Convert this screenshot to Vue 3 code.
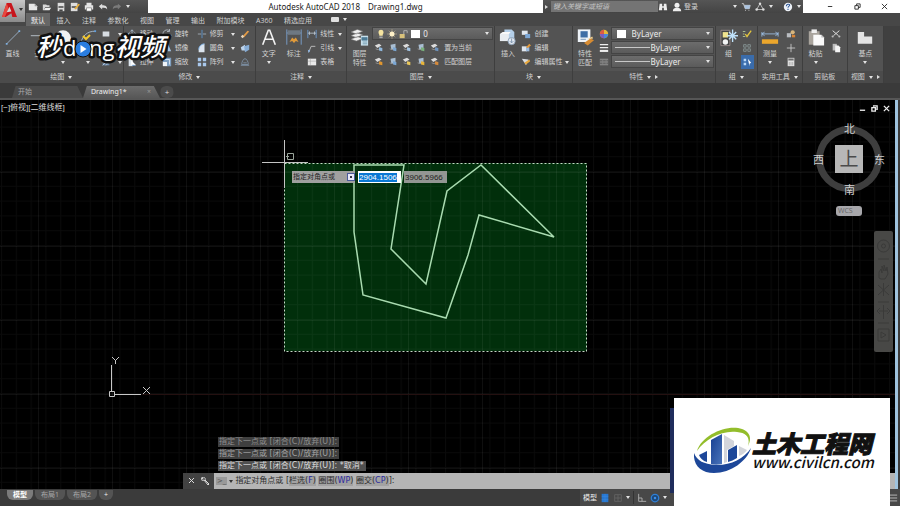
<template>
  <div class="app">
    <header class="titlebar">
      <div class="quick">
        <button v-for="q in quick" :key="q" class="tool" :class="{ dim: q === 'redo' }" :aria-label="q">
          <svg class="icon" viewBox="0 0 12 12" v-html="icons[q]" />
        </button>
        <span class="caret" />
      </div>
      <div class="title">
        <span>Autodesk AutoCAD 2018</span>
        <span>Drawing1.dwg</span>
      </div>
      <div class="search">
        <span class="caret right" />
        <input type="text" placeholder="键入关键字或短语" aria-label="搜索" />
      </div>
      <div class="account">
        <svg class="icon" viewBox="0 0 12 12" v-html="icons.find" />
        <button class="tool login">
          <svg class="icon" viewBox="0 0 12 12" v-html="icons.user" />登录
        </button>
        <span class="caret push" />
        <svg class="icon" viewBox="0 0 12 12" v-html="icons.cart" />
        <svg class="icon" viewBox="0 0 12 12" v-html="icons.share" />
        <span class="caret" />
        <svg class="icon help" viewBox="0 0 12 12" v-html="icons.help" />
        <span class="caret" />
      </div>
      <div class="window-buttons">
        <button aria-label="最小化"><svg viewBox="0 0 8 8"><path d="M1 4h5" /></svg></button>
        <button aria-label="还原"><svg viewBox="0 0 8 8"><path d="M1 3h4v4H1zM3 3V1h4v4H5" /></svg></button>
        <button aria-label="关闭"><svg viewBox="0 0 8 8"><path d="M1 1l6 6M7 1L1 7" /></svg></button>
      </div>
    </header>

    <button class="app-button" aria-label="应用程序菜单">
      <svg viewBox="0 0 16 17">
        <path d="M0 16L5 1h5l6 15h-5l-1-4-6 4z" fill="#c8161d" />
        <path d="M5 1l2 6-4 9H0z" fill="#e8483f" />
        <path d="M8 5l2 5-5 1z" fill="#d8d8d8" />
      </svg>
      <span class="caret dark" />
    </button>

    <nav class="tabs">
      <div class="tab-list">
        <button v-for="(t, i) in tabs" :key="t" :class="{ active: i === 0 }">{{ t }}</button>
      </div>
      <span class="tab-box" />
      <span class="caret" />
    </nav>

    <section class="ribbon">
      <div v-for="p in panels" :key="p.id" class="panel" :class="p.id">
        <div class="panel-body">
          <button v-for="b in p.big" :key="b.icon" class="big" :aria-label="b.icon">
            <svg class="big-icon" viewBox="0 0 20 20" v-html="icons[b.icon]" />
            <span v-for="l in b.labels" :key="l" class="label">{{ l }}</span>
            <span v-if="b.caret" class="caret" />
          </button>

          <div v-if="p.id === 'layers'" class="layer-tools">
            <label class="combo">
              <svg class="icon" viewBox="0 0 12 12" v-html="icons.bulb" />
              <svg class="icon" viewBox="0 0 12 12" v-html="icons.sun" />
              <svg class="icon" viewBox="0 0 12 12" v-html="icons.unlock" />
              <span class="swatch" />
              <select aria-label="图层"><option>0</option></select>
              <span class="caret" />
            </label>
            <div v-for="(row, r) in layerRows" :key="row.text" class="layer-row">
              <svg v-for="n in 5" :key="n" class="icon" viewBox="0 0 12 12" v-html="layerIcon(r, n)" />
              <button class="tool">{{ row.text }}</button>
            </div>
          </div>

          <div v-for="(col, i) in p.cols" :key="i" class="col" :class="col.size">
            <button v-for="(r, j) in col.rows" :key="j" class="tool" :class="{ on: r.on }" :aria-label="r.text || r.icon">
              <svg v-if="r.icon" class="icon" viewBox="0 0 12 12" v-html="icons[r.icon]" />
              <span v-if="r.text">{{ r.text }}</span>
              <span v-if="r.caret" class="caret push" />
            </button>
          </div>

          <div v-if="p.id === 'props'" class="prop-combos">
            <label v-for="c in ['颜色', '线宽', '线型']" :key="c" class="combo">
              <span v-if="c === '颜色'" class="swatch" />
              <span v-else class="line" />
              <select :aria-label="c" :class="{ first: c === '颜色' }"><option>ByLayer</option></select>
              <span class="caret" />
            </label>
          </div>
        </div>
        <footer>
          <span>{{ p.title }}</span>
          <span v-if="!p.plain" class="caret" />
          <span v-if="p.corner" class="caret corner" />
        </footer>
      </div>
      <div class="ribbon-rest" />
    </section>

    <nav class="doc-tabs">
      <button class="doc start">开始</button>
      <button class="doc current">Drawing1*<span class="x">×</span></button>
      <button class="doc add">+</button>
    </nav>

    <main class="canvas">
      <svg class="drawing">
        <defs>
          <pattern id="minor" x="1" y="-3" width="14.8" height="14.8" patternUnits="userSpaceOnUse">
            <path d="M0 .5H15M.5 0V15" class="minor" />
          </pattern>
          <pattern id="major" x="38" y="-2" width="74" height="74" patternUnits="userSpaceOnUse">
            <path d="M0 .5H74M.5 0V74" class="major" />
          </pattern>
        </defs>
        <rect x="284" y="63" width="303" height="188" class="window-fill" />
        <rect width="100%" height="100%" fill="url(#minor)" />
        <rect width="100%" height="100%" fill="url(#major)" />
        <path d="M142 294.500H2000" class="x-axis" />
        <rect x="284.500" y="63.500" width="302" height="188" class="window-edge" />
        <polygon :points="outline" class="outline" />
        <path d="M284.500 40V88M262 62.500H308" class="cursor" />
        <path d="M287.500 53.500h6v6h-6zM286 56.500h3" class="pick" />
        <path d="M111.500 265V291M115 294.500H141M109.500 291.500h5v5h-5z" class="ucs" />
        <path d="M112 257l3.500 3.500L119 257M115.500 260v4M143 287l7 7M150 287l-7 7" class="ucs" />
      </svg>

      <div class="view-label">[−]俯视][二维线框]</div>

      <div class="view-buttons">
        <button aria-label="最小化"><svg viewBox="0 0 8 8"><path d="M1 6h6" /></svg></button>
        <button aria-label="还原"><svg viewBox="0 0 8 8"><path d="M1 3h4v4H1zM3 2V1h4v4H6" /></svg></button>
        <button aria-label="关闭"><svg viewBox="0 0 8 8"><path d="M1 1l6 6M7 1L1 7" /></svg></button>
      </div>

      <div class="dyn-input">
        <label for="dyn-x">指定对角点或<span class="down" /></label>
        <input id="dyn-x" ref="dynX" type="text" value="2904.1506" />
        <input class="second" type="text" value="3906.5966" aria-label="Y" />
      </div>

      <div class="compass">
        <span class="north">北</span>
        <span class="west">西</span>
        <button class="face">上</button>
        <span class="east">东</span>
        <span class="south">南</span>
      </div>
      <button class="wcs">WCS</button>

      <div class="nav-bar">
        <svg viewBox="0 0 19 121">
          <circle cx="9.500" cy="15" r="6" />
          <circle cx="9.500" cy="15" r="2" />
          <path d="M4 28h11M5 47v-6l2-3 1 4v-7l2 5v-6l2 6 1-4 1 7-3 5H7zM4 54l11 10M15 54L4 64M9.500 52v13M4 71h11M9.500 74v14M5 80h9M6 77l-3 3 3 3M13 77l3 3-3 3M4 92h11M4 98h11v12H4zM7 101l5 3-5 3z" />
        </svg>
      </div>

      <div class="command">
        <div v-for="(line, i) in history" :key="i" class="history" :class="'age-' + i">{{ line }}</div>
        <div class="command-line">
          <div class="handle">
            <button aria-label="关闭"><svg viewBox="0 0 8 8"><path d="M1 1l5 5M6 1L1 6" /></svg></button>
            <button aria-label="自定义"><svg viewBox="0 0 8 8"><path d="M1 0l1 2-2-1c0 2 1 3 3 2l4 5 1-1-4-4c1-2-1-3-3-3" /></svg></button>
          </div>
          <span class="prompt">&gt;_</span>
          <span class="caret dark" />
          <span class="text">指定对角点或 [<button>栏选(<b>F</b>)</button> <button>圈围(<b>WP</b>)</button> <button>圈交(<b>CP</b>)</button>]:</span>
        </div>
      </div>
    </main>

    <footer class="status">
      <div class="layouts">
        <button class="active">模型</button>
        <button>布局1</button>
        <button>布局2</button>
        <button class="plus">+</button>
      </div>
      <div class="status-tools">
        <button>模型</button>
        <svg class="icon" viewBox="0 0 12 12" v-html="icons.gridOn" />
        <svg class="icon" viewBox="0 0 12 12" v-html="icons.snap" />
        <span class="caret" />
        <span class="rule" />
        <svg class="icon" viewBox="0 0 12 12" v-html="icons.ortho" />
        <svg class="icon" viewBox="0 0 12 12" v-html="icons.polar" />
        <span class="caret" />
        <svg class="icon menu" viewBox="0 0 12 12" v-html="icons.menu" />
      </div>
    </footer>

    <svg class="watermark" viewBox="0 0 140 42">
      <g class="brand">
        <text x="2" y="28" class="cn">秒</text>
        <text x="29" y="28" class="en">d</text>
        <text x="55" y="28" class="en">ng</text>
        <text x="81" y="28" class="cn">视频</text>
      </g>
      <circle cx="49" cy="21" r="8" class="ball" />
      <path d="M46.500 17l6 4-6 4z" fill="#fff" />
      <path d="M49 8l3 3 4-4" class="sprout" />
    </svg>

    <div class="site-edge" />
    <aside class="site">
      <svg class="emblem" viewBox="0 0 58 48">
        <path d="M3 24C8 8 33-3 48 2c8 3 10 9 6 17C56 12 54 6 43 5 28 3 11 12 3 24z" fill="#93bd2b" />
        <path d="M0 26c-1 12 7 20 20 20 17 0 33-12 37-25-7 11-22 18-36 17C10 37 3 34 0 26z" fill="#1d4799" />
        <path d="M5 28l8-4v11c-4-1-7-4-8-7z" fill="#1d4799" />
        <path d="M17 13l11-6v30c-4 1-8 1-11 0z" fill="url(#tower)" />
        <path d="M30 8l10 6v5l-7 4v12l-3 1z" fill="#d3d5db" />
        <path d="M34 23l9-5v13c-3 2-6 3-9 4z" fill="#1d4799" />
        <path d="M45 19l8 4c-2 3-5 5-8 6z" fill="#d3d5db" />
        <defs>
          <linearGradient id="tower" x1="0" y1="0" x2="1" y2="1">
            <stop offset="0" stop-color="#173f92" />
            <stop offset="1" stop-color="#4a74ba" />
          </linearGradient>
        </defs>
      </svg>
      <div class="site-name">
        <strong>土木工程网</strong>
        <a href="#">www.civilcn.com</a>
      </div>
    </aside>
  </div>
</template>

<script setup>
import { ref, onMounted } from 'vue';

const quick = ['new', 'open', 'save', 'saveAs', 'print', 'undo', 'redo'];
const tabs = ['默认', '插入', '注释', '参数化', '视图', '管理', '输出', '附加模块', 'A360', '精选应用'];

const panels = [
  {
    id: 'draw',
    title: '绘图',
    big: [
      { icon: 'line', labels: ['直线'] },
      { icon: 'polyline', labels: ['多'] },
      { icon: 'circle', caret: true },
      { icon: 'arc', caret: true },
    ],
    cols: [{ size: 'small', rows: [{ icon: 'rect', caret: true }, { icon: 'ellipse', caret: true }, { icon: 'hatch', caret: true }] }],
  },
  {
    id: 'modify',
    title: '修改',
    cols: [
      { size: 'mid', rows: [{ icon: 'move', text: '移动' }, { icon: 'copy' }, { icon: 'stretch', text: '拉伸' }] },
      { size: 'mid', rows: [{ icon: 'rotate', text: '旋转' }, { icon: 'mirror', text: '镜像' }, { icon: 'scale', text: '缩放' }] },
      {
        size: 'wide',
        rows: [
          { icon: 'trim', text: '修剪', caret: true },
          { icon: 'fillet', text: '圆角', caret: true },
          { icon: 'array', text: '阵列', caret: true },
        ],
      },
      { size: 'tiny', rows: [{ icon: 'erase' }, { icon: 'explode' }, { icon: 'offset' }] },
    ],
  },
  {
    id: 'annotate',
    title: '注释',
    big: [
      { icon: 'text', labels: ['文字'], caret: true },
      { icon: 'dimension', labels: ['标注'] },
    ],
    cols: [
      {
        size: 'rest',
        rows: [
          { icon: 'linear', text: '线性', caret: true },
          { icon: 'leader', text: '引线', caret: true },
          { icon: 'table', text: '表格' },
        ],
      },
    ],
  },
  { id: 'layers', title: '图层', big: [{ icon: 'layers', labels: ['图层', '特性'] }] },
  {
    id: 'block',
    title: '块',
    big: [{ icon: 'insert', labels: ['插入'] }],
    cols: [
      {
        size: 'rest',
        rows: [
          { icon: 'blockNew', text: '创建' },
          { icon: 'blockEdit', text: '编辑' },
          { icon: 'blockAttr', text: '编辑属性', caret: true },
        ],
      },
    ],
  },
  {
    id: 'props',
    title: '特性',
    corner: true,
    big: [{ icon: 'match', labels: ['特性', '匹配'] }],
    cols: [{ size: 'tiny', rows: [{ icon: 'wheel' }, { icon: 'weight' }, { icon: 'ltype' }] }],
  },
  {
    id: 'group',
    title: '组',
    big: [{ icon: 'group', labels: ['组'] }],
    cols: [{ size: 'tiny', rows: [{ icon: 'ungroup' }, { icon: 'groupEdit' }, { icon: 'groupPick', on: true }] }],
  },
  {
    id: 'utils',
    title: '实用工具',
    big: [{ icon: 'measure', labels: ['测量'], caret: true }],
    cols: [{ size: 'tiny', rows: [{ icon: 'select' }, { icon: 'point' }, { icon: 'calc' }] }],
  },
  {
    id: 'clip',
    title: '剪贴板',
    plain: true,
    big: [{ icon: 'paste', labels: ['粘贴'], caret: true }],
    cols: [{ size: 'tiny', rows: [{ icon: 'cut' }, { icon: 'copyClip' }] }],
  },
  { id: 'view', title: '视图', corner: true, big: [{ icon: 'base', labels: ['基点'], caret: true }] },
];

const layerRows = [{ text: '置为当前' }, { text: '匹配图层' }];
const layerMarks = [
  ['#8fb8dd', '#7ba7d4', '#a3c4e3', '#79b07c', '#6e93bd'],
  ['#e0962f', '#7ba7d4', '#e8c65a', '#e8b53a', '#d58a3c'],
];

function layerIcon(row, n) {
  const mark = layerMarks[row][n - 1];
  const sheet = n % 2 ? '<path d="M1 3l5-2 3 2-5 3z" fill="#dcdcdc"/>' : '<path d="M3 2l6-1v6l-5 1z" fill="#a9bed2"/>';
  return `${sheet}<path d="M2 7l3 1 3-2" stroke="#9a9a9a" fill="none"/><path d="M6 5l4 1v4l-4-1z" fill="${mark}"/>`;
}

const history = ['指定下一点或 [闭合(C)/放弃(U)]:', '指定下一点或 [闭合(C)/放弃(U)]:', '指定下一点或 [闭合(C)/放弃(U)]: *取消*'];

const outline = '354,65 404,65 391,149 426,184 447,91 481,65 554,137 479,115 468,155 446,218 363,195 354,132';

const icons = {
  new: '<path d="M1 2h7l3 3v5H1z" fill="#e6e6e6"/><path d="M8 2v3h3" fill="#999"/>',
  open: '<path d="M1 3h4l1 1h3v2H4l-2 4H1z" fill="#d6d6d6"/><path d="M4 7h7l-2 3H2z" fill="#f0f0f0"/>',
  save: '<path d="M2 1h8v10H2z" fill="#ddd"/><path d="M3 5h6v2H3zM4 9h4v2H4z" fill="#444"/>',
  saveAs: '<path d="M1 1h8v10H1z" fill="#ddd"/><path d="M2 5h6v2H2z" fill="#555"/><path d="M5 8l5-6 2 1-5 6z" fill="#e5ad3c"/>',
  print: '<path d="M3 1h6v3H3zM1 4h10v5H1z" fill="#e4e4e4"/><path d="M3 7h6v4H3z" fill="#fff" stroke="#555" stroke-width=".6"/>',
  undo: '<path d="M1 5l4-3v2c4 0 6 1 6 5-1-2-3-2-6-2v2z" fill="#ddd"/>',
  redo: '<path d="M11 5L7 2v2C3 4 1 5 1 9c1-2 3-2 6-2v2z" fill="#999"/>',
  find: '<path d="M2 2h3v3h2V2h3l1 8H7V7H5v3H1z" fill="#eee"/>',
  user: '<circle cx="6" cy="4" r="3" fill="#eee"/><path d="M1 11c0-3 2-4 5-4s5 1 5 4z" fill="#eee"/>',
  cart: '<path d="M1 2h2l2 6h5l1-4H4M5 10h1M9 10h1" stroke="#ddd" fill="none"/><path d="M4 4h7l-1 4H5z" fill="#aac3e0"/>',
  share: '<path d="M6 2l4 7H2z" fill="none" stroke="#ccc"/><circle cx="6" cy="2" r="1.500" fill="#ddd"/><circle cx="2" cy="9" r="1.500" fill="#ddd"/><circle cx="10" cy="9" r="1.500" fill="#ddd"/>',
  help: '<circle cx="6" cy="6" r="5" fill="#eef2f8"/><path d="M4 5c0-3 4-3 4-1 0 1-2 1-2 3M6 8v1.500" stroke="#2d5798" stroke-width="1.300" fill="none"/>',
  line: '<path d="M3 17L17 3" stroke="#9db2c7"/><path d="M2 16h2v2H2zM16 2h2v2h-2z" fill="#7fb0e0"/>',
  polyline: '<path d="M2 8h14" stroke="#bcc6d0" fill="none"/>',
  circle: '<circle cx="10" cy="11" r="9" fill="#f2f2f2"/>',
  arc: '<path d="M2 16C4 8 9 3 18 3" stroke="#a9bccf" fill="none"/><path d="M17 2h2v2h-2z" fill="#5f9fe0"/>',
  rect: '<path d="M2 3h8v6H2z" fill="#d7dce2"/>',
  ellipse: '<ellipse cx="6" cy="6" rx="5" ry="3" stroke="#ccc" fill="none"/>',
  hatch: '<path d="M2 2h8v8H2z" fill="#6e8caf"/><path d="M2 10l8-8M2 6l4-4M6 10l4-4" stroke="#c6d4e4"/>',
  move: '<path d="M6 1v10M1 6h10M4 3l2-2 2 2M4 9l2 2 2-2M3 4L1 6l2 2M9 4l2 2-2 2" stroke="#aebfd0" fill="none"/>',
  copy: '<circle cx="4" cy="5" r="3" stroke="#b9c9da" fill="none"/><circle cx="8" cy="7" r="3" fill="#8fb0d3"/>',
  stretch: '<path d="M2 1h5v10H2z" fill="#dde6ef"/><path d="M5 4l6 6H5z" fill="#fff"/><path d="M6 10h4" stroke="#74a4d8"/>',
  rotate: '<path d="M9 2a5 5 0 1 0 2 5M9 0v3H6" stroke="#b7bfc8" fill="none"/>',
  mirror: '<path d="M5 1v9H1zM7 1v9h4z" fill="#a7c5e5"/>',
  scale: '<path d="M1 1h10v10H6V6H1z" fill="#7f9fc0"/><path d="M1 6h5v5H1z" fill="#f0f4f8"/><path d="M3 3h6v6" stroke="#e1ecf6" fill="none"/>',
  trim: '<path d="M1 6h4M7 6h4" stroke="#a8b3be"/><path d="M6 1v10" stroke="#5e9ad6"/>',
  fillet: '<path d="M2 11V8c0-4 3-7 7-7v10z" fill="#dbe4ee"/><path d="M2 8c0-4 3-7 7-7" stroke="#6aa2dd" fill="none"/>',
  array: '<path d="M1 1h4v4H1zM7 1h4v4H7zM1 7h4v4H1zM7 7h4v4H7z" fill="#a9c8ec"/>',
  erase: '<path d="M2 10l7-8 2 1-6 7z" fill="#e39a45"/><path d="M1 9l2-2 2 2-2 2z" fill="#e8d6bc"/>',
  explode: '<path d="M1 5l5-3v7H2z" fill="#bcd3ec"/><path d="M5 4l6-2v6l-5 3z" fill="#86acd5"/>',
  offset: '<path d="M2 9c0-3 2-7 4-7s4 4 4 7zM4 7h4" stroke="#8195ab" fill="none"/><path d="M1 10h10" stroke="#8195ab"/>',
  text: '<path d="M3 18L9.200 2h1.600L17 18M5.500 12h9" stroke="#f2f2f2" stroke-width="1.800" fill="none"/>',
  dimension: '<path d="M2 1v17M18 1v17M2 5h16" stroke="#7ba2cf"/><path d="M3 2h14v5H3z" fill="#6e7882"/><path d="M5 15l3-5 2 2 2-2 3 5-3-1-2 2-2-2z" fill="#e09a3a"/>',
  linear: '<path d="M1 1v10M11 1v10" stroke="#6ea0da"/><path d="M1 5h10M3 3v4M9 3v4" stroke="#bcc6d0"/>',
  leader: '<path d="M2 11l3-7h5" stroke="#ccc" fill="none"/><path d="M1 8l3 1-2 3z" fill="#8db5e2"/>',
  table: '<path d="M1 2h10v8H1z" fill="#e9e9e9"/><path d="M1 5h10M4 2v8" stroke="#9b9b9b" stroke-width=".6"/>',
  layers: '<path d="M0 4l7-3 6 2-7 3zM0 8l7-3 6 2-7 3zM0 12l7-3 6 2-7 3z" fill="#f0f0f0" stroke="#777" stroke-width=".6"/><path d="M11 8h8v11h-8z" fill="#c8e0ec"/><path d="M12 10h6v3h-6zM13 15h5M13 17h5" fill="#4c7a95" stroke="#4c7a95" stroke-width=".7"/>',
  bulb: '<path d="M3 4c0-4 6-4 6 0 0 2-1 2-1 4H4c0-2-1-2-1-4z" fill="#f5e4a0"/><path d="M4 9h4v2H4z" fill="#aaa"/>',
  sun: '<path d="M6 0v12M0 6h12M2 2l8 8M10 2l-8 8" stroke="#bfb28d" stroke-width=".7"/><circle cx="6" cy="6" r="3" fill="#fff1c9"/>',
  unlock: '<path d="M2 6h6v5H2z" fill="#d9c27b"/><path d="M7 6V2h4v3" stroke="#bbb" fill="none"/>',
  insert: '<path d="M6 1h8l3 3v9H6z" fill="#b4cfe9"/><path d="M1 6h10v8H1z" fill="#e9edf1"/><path d="M1 6l3-2h9l-2 2z" fill="#fafafa"/><circle cx="14" cy="14" r="4" fill="#e2e8f0" stroke="#899eb5"/><path d="M14 11v5M12 14l2 2 2-2" stroke="#7c94ae" fill="none"/>',
  blockNew: '<path d="M1 2h7v5H1z" fill="#dfe6ee"/><path d="M5 6h6v5H5z" fill="#7ca7d6"/>',
  blockEdit: '<path d="M1 4h6v6H1z" fill="#dfe6ee"/><path d="M6 5h4v5H6z" fill="#9dbbdc"/><path d="M6 5l4-4 2 2-4 3z" fill="#e39a3b"/>',
  blockAttr: '<path d="M1 2l8 1-3 7z" fill="#d8dce1"/><path d="M4 7l6-4 1 2-5 4z" fill="#e8a83c"/>',
  match: '<path d="M2 1h14v14H2z" fill="#eef3f8"/><path d="M5 3h8v7H5z" fill="#3e6ea5"/><path d="M5 12h6" stroke="#6d8fb3"/><path d="M9 16l7-5 4 2-7 6z" fill="#d68b32"/><path d="M13 12l5-3 1 2" fill="#f3cf8d"/>',
  wheel: '<circle cx="6" cy="6" r="5" fill="#e2b93c"/><path d="M6 6V1a5 5 0 0 0-5 5z" fill="#dd5b43"/><path d="M6 6H1a5 5 0 0 0 5 5z" fill="#7c5bbd"/><path d="M6 6v5a5 5 0 0 0 5-5z" fill="#4889d9"/>',
  weight: '<path d="M1 2h10M1 5.500h10" stroke="#eee" stroke-width="1.500"/><path d="M1 9.500h10" stroke="#eee" stroke-width="2.500"/>',
  ltype: '<path d="M1 2h10v8H1z" fill="#838383"/><path d="M1 4.500h10M1 7.500h10" stroke="#555" stroke-dasharray="3 1"/>',
  group: '<path d="M1 2h10v17H1z" fill="#444" stroke="#a99" stroke-width=".8"/><path d="M3 4h6v6H3z" fill="#f0e38f"/><circle cx="6" cy="15" r="3" fill="#f4f4f4"/><path d="M14 1v14M8 8h12M10 4l8 8M18 4l-8 8" stroke="#bfe2fb" stroke-width="1.500"/>',
  ungroup: '<path d="M1 3h3M1 6h2M1 9h3" stroke="#b9d09a"/><path d="M4 6l2 3 5-7" stroke="#e4c63e" stroke-width="1.600" fill="none"/>',
  groupEdit: '<path d="M2 2h3v3H2zM7 2h3v3H7zM2 7h3v3H2zM7 7h3v3H7z" fill="none" stroke="#9aa" stroke-width=".8"/>',
  groupPick: '<path d="M2 2h3v3H2zM2 7h3v3H2z" fill="#b9d8f8"/><path d="M7 2l4 5-2 1v3z" fill="#fff"/>',
  measure: '<path d="M1 4v5M19 4v5M1 6h18" stroke="#9bbbe0"/><path d="M4 4L1 6l3 2M16 4l3 2-3 2" stroke="#9bbbe0" fill="none"/><path d="M1 12h18v5H1z" fill="#eba62c"/>',
  select: '<path d="M1 5h5v5H1z" fill="#b9bcc0"/><circle cx="8" cy="4" r="2.500" fill="#d8b67c"/><path d="M7 7h4v3H7z" fill="#d98536"/>',
  point: '<path d="M6 1v10M1 6h10" stroke="#d0d0d0"/>',
  calc: '<path d="M2 1h8v10H2z" fill="#e2e2e2"/><path d="M3 2h6v2H3zM4 6v4M6 6v4M8 6v4" fill="#666" stroke="#888" stroke-width=".6"/>',
  paste: '<path d="M2 3h12v15H2z" fill="#a9a49d"/><path d="M5 1h6v4H5z" fill="#eee"/><path d="M7 7h9l3 3v9H7z" fill="#fafafa"/><path d="M16 7v3h3" fill="#bbb"/>',
  cut: '<path d="M2 2l7 6M10 2L3 8" stroke="#ddd" stroke-width="1.200"/><circle cx="2" cy="9" r="1.300" fill="#bbb"/><circle cx="10" cy="9" r="1.300" fill="#bbb"/>',
  copyClip: '<path d="M2 1h5v8H2z" fill="#bdbdbd"/><path d="M5 3h4l2 2v6H5z" fill="#f5f5f5"/>',
  base: '<path d="M2 4h7v5h9v8H2z" fill="#e4e4e4"/>',
  gridOn: '<path d="M2 1h8v10H2z" fill="#2777cf"/><path d="M6 1v10M2 4h8M2 8h8" stroke="#3f8ae0" stroke-width=".6"/>',
  snap: '<path d="M2 2h8v8H2zM6 2v8M2 6h8" fill="none" stroke="#666"/>',
  ortho: '<path d="M2 1v9h9M2 6h4v4" stroke="#bbb" fill="none"/>',
  polar: '<circle cx="6" cy="6" r="4.500" fill="#1d4878" stroke="#2f80d8" stroke-width="1.500"/><circle cx="6" cy="6" r="1.500" fill="#3d8fe8"/>',
  menu: '<path d="M1 2.500h10M1 6h10M1 9.500h10" stroke="#b5b5b5" stroke-width="1.200"/>',
};

const dynX = ref(null);

onMounted(() => {
  dynX.value.focus();
  dynX.value.select();
});
</script>

<style>
body {
  margin: 0;
  background: #3a3a3a;
}
</style>

<style scoped>
.app {
  position: relative;
  display: flex;
  flex-direction: column;
  min-height: 100vh;
  overflow: hidden;
  background: #3a3a3a;
  color: #d2d2d2;
  font-family: 'Open Sans', 'Noto Sans CJK SC', sans-serif;
  font-size: 7px;
  line-height: 10px;
}

button,
input,
select {
  margin: 0;
  padding: 0;
  border: 0;
  background: none;
  color: inherit;
  font: inherit;
  outline: none;
}

button {
  white-space: nowrap;
}

.icon {
  display: block;
  width: 10px;
  height: 10px;
  flex-shrink: 0;
}

.tool {
  display: flex;
  align-items: center;
}

.dim {
  opacity: 0.6;
}

.caret {
  width: 0;
  height: 0;
  flex-shrink: 0;
  border: 2px solid transparent;
  border-top: 3px solid #e4e4e4;
  border-bottom: 0;
}

.caret.dark {
  border-top-color: #333;
}

.caret.right,
.caret.corner {
  border: 2px solid transparent;
  border-left: 3px solid #ddd;
  border-right: 0;
}

.push {
  margin-left: auto;
}

/* Title bar */
.titlebar {
  display: flex;
  height: 13px;
  background: linear-gradient(#555, #444);
}

.quick {
  display: flex;
  align-items: center;
  gap: 4px;
  flex: 0 0 120px;
  padding-left: 28px;
}

.title {
  display: flex;
  flex: 1;
  justify-content: center;
  align-items: center;
  gap: 8px;
  box-sizing: border-box;
  background: #fff;
  color: #222;
  font-family: 'Noto Sans', sans-serif;
  font-size: 8px;
}

.search {
  display: flex;
  align-items: center;
  gap: 3px;
  width: 113px;
  padding-left: 2px;
}

.search input {
  flex: 1;
  min-width: 0;
  height: 11px;
  padding-left: 2px;
  background: #747474;
}

.search input::placeholder {
  color: #c4c4c4;
  font-style: italic;
}

.account {
  display: flex;
  align-items: center;
  gap: 4px;
  box-sizing: border-box;
  width: 145px;
  padding-right: 2px;
}

.login {
  gap: 2px;
}

.help {
  margin-left: 6px;
}

.window-buttons {
  display: flex;
  justify-content: space-between;
  align-items: center;
  box-sizing: border-box;
  width: 97px;
  padding: 0 12px 0 24px;
  background: #fff;
}

.window-buttons svg,
.view-buttons svg {
  display: block;
  width: 7px;
  height: 7px;
  fill: none;
  stroke: #222;
}

.app-button {
  position: absolute;
  z-index: 2;
  display: flex;
  align-items: center;
  gap: 2px;
  height: 22px;
  padding: 0 2px 3px;
  background: linear-gradient(#c8c8c8, #8b8b8b);
}

.app-button svg {
  width: 15px;
  height: 16px;
}

/* Ribbon tabs */
.tabs {
  display: flex;
  align-items: center;
  gap: 4px;
  height: 13px;
  padding-left: 26px;
  background: #474747;
}

.tab-list {
  display: flex;
  align-self: stretch;
  justify-content: space-between;
  width: 291px;
}

.tab-list button {
  padding: 2px 5px 0;
}

.tab-list .active {
  background: #666;
  color: #f2f2f2;
}

.tab-box {
  width: 8px;
  height: 5px;
  margin-left: 10px;
  border-radius: 1px;
  background: #e0e0e0;
}

/* Ribbon panels */
.ribbon {
  display: flex;
  height: 57px;
  background: #535353;
}

.panel {
  display: flex;
  flex-direction: column;
  box-sizing: border-box;
  min-width: 0;
  border-right: 1px solid #3e3e3e;
}

.draw { flex: 124 1 0; }
.modify { flex: 133 1 0; }
.annotate { flex: 91 1 0; }
.layers { flex: 149 1 0; }
.block { flex: 77 1 0; }
.props { flex: 144 1 0; }
.group { flex: 41 1 0; }
.utils { flex: 45 1 0; }
.clip { flex: 44 1 0; }
.view { flex: 36 1 0; }
.ribbon-rest { flex: 16 1 0; background: #404040; }

.panel-body {
  display: flex;
  flex: 1;
  min-height: 0;
  padding-top: 1px;
}

.modify .panel-body {
  padding-left: 2px;
}

.view .panel-body {
  justify-content: center;
}

.panel footer {
  display: flex;
  justify-content: center;
  align-items: center;
  gap: 4px;
  height: 12px;
  background: #4b4b4b;
}

.big {
  display: flex;
  flex-direction: column;
  align-items: center;
  flex: 0 0 25px;
}

.big-icon {
  width: 18px;
  height: 19px;
  margin: 1px 0 2px;
}

.big .caret {
  margin: auto 0 7px;
}

.label {
  line-height: 9px;
}

.col {
  display: flex;
  flex-direction: column;
}

.col .tool {
  gap: 3px;
  height: 14px;
  padding: 0 1px;
}

.tiny { width: 13px; }
.small { width: 23px; }
.mid { width: 35px; }
.wide { width: 43px; }
.rest { flex: 1; }

.rest .caret,
.wide .caret {
  margin-right: 3px;
}

.tool.on {
  background: #3a6cab;
}

.utils .col,
.clip .col {
  margin-left: 2px;
}

.layer-tools,
.prop-combos {
  display: flex;
  flex: 1;
  flex-direction: column;
  min-width: 0;
  padding-right: 1px;
}

.combo {
  display: flex;
  align-items: center;
  gap: 1px;
  box-sizing: border-box;
  height: 13px;
  margin-bottom: 1px;
  padding: 0 3px;
  border: 1px solid #444;
  background: linear-gradient(#6c6c6c, #5b5b5b);
}

.swatch {
  width: 9px;
  height: 8px;
  margin: 0 2px;
  background: #fff;
}

.line {
  width: 35px;
  height: 1px;
  background: #c8c8c8;
}

.combo select {
  flex: 1;
  min-width: 0;
  appearance: none;
  color: #ececec;
  font-family: 'Noto Sans', sans-serif;
  font-size: 8px;
  font-stretch: normal;
}

.combo .first {
  padding-left: 3px;
}

.layer-row {
  display: flex;
  align-items: center;
  gap: 4px;
  height: 14px;
  padding-left: 2px;
}

/* Document tabs */
.doc-tabs {
  display: flex;
  align-items: flex-end;
  height: 15px;
  padding-left: 12px;
  border-bottom: 2px solid #565656;
  background: #3a3a3a;
}

.doc {
  height: 12px;
  padding: 0 6px;
  background: #4b4b4b;
  clip-path: polygon(5% 0, 92% 0, 100% 100%, 0 100%);
  color: #aaa;
  text-align: left;
}

.start {
  width: 71px;
}

.current {
  display: flex;
  justify-content: space-between;
  align-items: center;
  width: 77px;
  padding: 0 9px 0 8px;
  background: linear-gradient(#6c6c6c, #575757);
  color: #eee;
  font-family: 'Noto Sans', sans-serif;
  font-size: 7px;
}

.x {
  color: #999;
}

.add {
  width: 14px;
  padding: 0;
  border-radius: 6px;
  color: #ddd;
  font-size: 8px;
  text-align: center;
}

/* Drawing area */
.canvas {
  position: relative;
  display: flex;
  flex: 1;
  flex-direction: column;
  justify-content: flex-end;
  min-height: 300px;
  margin-right: 2px;
  border-right: 3px solid #9fc3de;
  background: #000;
}

.drawing {
  position: absolute;
  width: 100%;
  height: 100%;
  fill: none;
}

.minor { stroke: rgba(255, 255, 255, 0.04); }
.major { stroke: rgba(255, 255, 255, 0.06); }
.x-axis { stroke: #241010; }
.window-fill { fill: #012f0b; }
.window-edge { stroke: #c5d8c6; stroke-dasharray: 2 2; }
.outline { stroke: #a9dbb0; stroke-width: 1.5; }
.cursor { stroke: #c4c4c4; }
.pick { stroke: #9aa59b; }
.ucs { stroke: #c8c8c8; }

.view-label {
  position: absolute;
  top: 3px;
  left: 1px;
  color: #dcdcdc;
  font-family: 'Liberation Sans', 'Noto Sans CJK SC', sans-serif;
  font-size: 8px;
}

.view-buttons {
  position: absolute;
  top: 5px;
  right: 5px;
  display: flex;
  gap: 5px;
}

.view-buttons svg {
  stroke: #eee;
  stroke-width: 1.5;
}

.dyn-input {
  position: absolute;
  top: 71px;
  left: 292px;
  display: flex;
  gap: 3px;
  color: #222;
  font-family: 'Liberation Sans', 'Noto Sans CJK SC', sans-serif;
}

.dyn-input label {
  display: flex;
  justify-content: space-between;
  align-items: center;
  width: 61px;
  height: 12px;
  padding: 0 1px;
  background: #a0a0a0;
}

.down {
  width: 2px;
  height: 2px;
  border: 2px solid #e8e8f8;
  background: #334;
  outline: 1px solid #4a5a9a;
}

.dyn-input input {
  width: 43px;
  height: 12px;
  padding-left: 1px;
  box-sizing: border-box;
  background: #fff;
  font-size: 8px;
}

.dyn-input input::selection {
  background: #0a78d4;
  color: #fff;
}

.dyn-input .second {
  background: #939693;
}

.compass {
  position: absolute;
  top: 26px;
  right: 13px;
  box-sizing: border-box;
  width: 66px;
  height: 66px;
  border: 7px solid #3e3e3e;
  border-radius: 50%;
  color: #cfcfcf;
  font-size: 11px;
  line-height: 12px;
}

.compass > * {
  position: absolute;
}

.north { top: -10px; left: 21px; }
.south { bottom: -11px; left: 21px; }
.west { top: 21px; left: -10px; }
.east { top: 21px; right: -10px; }

.face {
  top: 12px;
  left: 12px;
  width: 28px;
  height: 28px;
  background: #b7b7b7;
  color: #4b4b4b;
  font-size: 19px;
  line-height: 26px;
}

.wcs {
  position: absolute;
  top: 106px;
  right: 33px;
  width: 26px;
  height: 10px;
  padding-left: 2px;
  border-radius: 3px;
  background: #a7a7ab;
  color: #666;
  text-align: left;
}

.nav-bar {
  position: absolute;
  top: 131px;
  right: 2px;
  width: 19px;
  height: 121px;
  border-radius: 2px;
  background: #484846;
}

.nav-bar svg {
  display: block;
  fill: none;
  stroke: #3a3a39;
}

/* Command window */
.command {
  position: relative;
  display: flex;
  flex-direction: column;
  align-items: flex-start;
  gap: 2px;
  margin-left: 183px;
  font-family: 'DejaVu Sans', 'Noto Sans CJK SC', sans-serif;
  font-size: 8px;
}

.history {
  margin-left: 35px;
  padding: 0 2px 0 1px;
  background: #3f3f3f;
}

.age-0 { color: #8d8d8d; }
.age-1 { color: #a3a3a3; }
.age-2 { background: #505050; color: #dcdcdc; }

.command-line {
  display: flex;
  align-items: center;
  align-self: stretch;
  gap: 2px;
  height: 16px;
  background: #b5b5b5;
  color: #2e2e2e;
}

.handle {
  display: flex;
  justify-content: space-evenly;
  align-items: center;
  align-self: stretch;
  width: 31px;
  background: #424242;
}

.handle svg {
  display: block;
  width: 8px;
  height: 8px;
  fill: none;
  stroke: #ddd;
}

.prompt {
  padding: 0 1px;
  background: #999;
  color: #555;
  font-size: 7px;
  line-height: 8px;
}

.text button {
  background: #a2a2a2;
}

.text b {
  color: #2a2aa0;
  font-weight: 400;
}

/* Status bar */
.status {
  display: flex;
  justify-content: space-between;
  height: 17px;
  background: #3b3b3b;
}

.layouts {
  display: flex;
  gap: 2px;
  padding: 1px 0 0 7px;
}

.layouts button {
  width: 30px;
  height: 10px;
  border-radius: 0 0 6px 6px;
  background: #545454;
  color: #a8a8a8;
}

.layouts .active {
  width: 26px;
  background: #7b7b7b;
  color: #fff;
  font-weight: 700;
}

.layouts .plus {
  width: 14px;
  color: #eee;
}

.status-tools {
  display: flex;
  align-items: center;
  gap: 3px;
  box-sizing: border-box;
  width: 320px;
  padding: 0 2px 0 3px;
  background: #484848;
}

.status-tools button {
  color: #eee;
}

.rule {
  width: 1px;
  height: 13px;
  background: #333;
}

.menu {
  margin-left: auto;
}

/* Overlaid marks */
.watermark {
  position: absolute;
  top: 28px;
  left: 34px;
  z-index: 3;
  width: 140px;
  height: 42px;
}

.brand {
  fill: #fff;
  stroke: #111;
  stroke-width: 5;
  stroke-linejoin: round;
  paint-order: stroke;
}

.cn {
  font: italic 500 25px 'Noto Sans CJK SC', sans-serif;
}

.en {
  font: 500 22px 'Open Sans', sans-serif;
}

.ball {
  fill: #2a7de0;
  stroke: #111;
  stroke-width: 1;
}

.sprout {
  fill: none;
  stroke: #f2c72e;
  stroke-width: 2;
}

.site-edge {
  position: absolute;
  right: 226px;
  bottom: 13px;
  width: 4px;
  height: 85px;
  background: #1f2d5c;
}

.site {
  position: absolute;
  right: 10px;
  bottom: 0;
  display: flex;
  align-items: center;
  box-sizing: border-box;
  width: 216px;
  height: 108px;
  padding: 0 0 2px 20px;
  background: #fff;
}

.emblem {
  width: 58px;
  height: 48px;
  flex-shrink: 0;
}

.site-name {
  display: flex;
  flex-direction: column;
  font-family: 'Noto Sans CJK SC', sans-serif;
  font-style: italic;
  color: #111;
}

.site-name strong {
  font-size: 24px;
  font-weight: 900;
  line-height: 22px;
  -webkit-text-stroke: 1px #111;
}

.site-name a {
  color: inherit;
  font-size: 15px;
  font-weight: 500;
  line-height: 16px;
  text-decoration: none;
}
</style>
